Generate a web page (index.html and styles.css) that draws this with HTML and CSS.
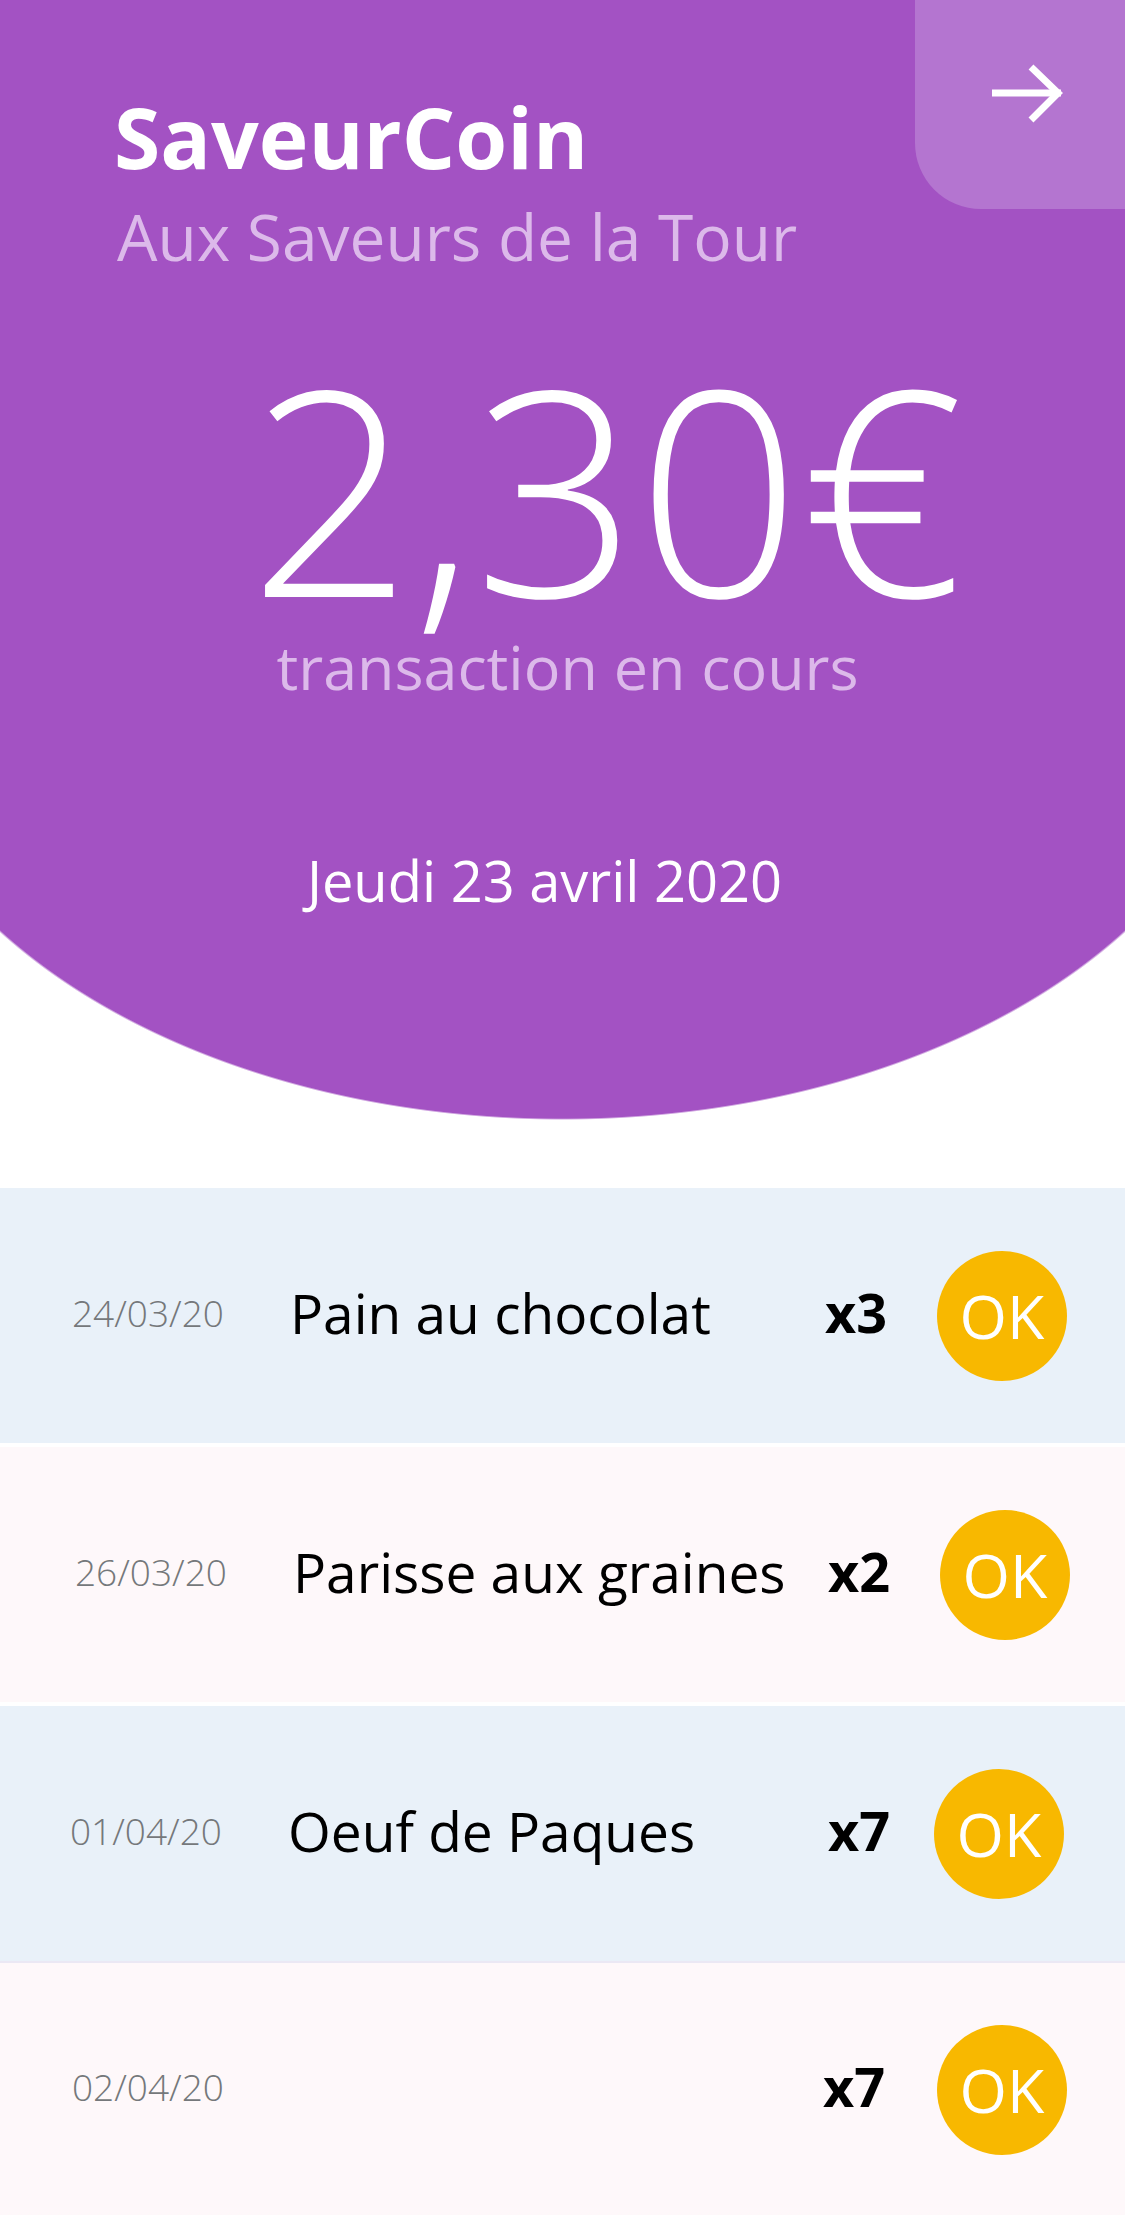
FILE: index.html
```html
<!DOCTYPE html>
<html lang="fr">
<head>
<meta charset="utf-8">
<title>SaveurCoin</title>
<link rel="stylesheet" href="styles.css">
</head>
<body>
<div class="screen">
  <header class="header">
    <a class="next-btn" href="#" aria-label="Suivant">
      <svg width="210" height="209" viewBox="0 0 210 209">
        <path d="M77 93 H146" stroke="#fff" stroke-width="7" fill="none"/>
        <path d="M116 67 L143 93 L116 120" stroke="#fff" stroke-width="7" fill="none"/>
      </svg>
    </a>
    <div class="brand">
      <h1 class="title">SaveurCoin</h1>
      <p class="subtitle">Aux Saveurs de la Tour</p>
    </div>
    <div class="amount">2,30€</div>
    <div class="status">transaction en cours</div>
    <div class="today">Jeudi 23 avril 2020</div>
  </header>

  <ul class="list">
    <li class="row row-blue">
      <span class="date">24/03/20</span>
      <span class="name">Pain au chocolat</span>
      <span class="qty">x3</span>
      <span class="ok">OK</span>
    </li>
    <li class="row row-pink row-shift-right">
      <span class="date">26/03/20</span>
      <span class="name">Parisse aux graines</span>
      <span class="qty">x2</span>
      <span class="ok">OK</span>
    </li>
    <li class="row row-blue row-shift-left">
      <span class="date">01/04/20</span>
      <span class="name">Oeuf de Paques</span>
      <span class="qty">x7</span>
      <span class="ok">OK</span>
    </li>
    <li class="row row-pink row-last">
      <span class="date">02/04/20</span>
      <span class="name"></span>
      <span class="qty qty-narrow">x7</span>
      <span class="ok">OK</span>
    </li>
  </ul>
</div>
</body>
</html>
```

FILE: styles.css
```css
* { box-sizing: border-box; }

html, body {
  margin: 0;
  padding: 0;
  background: #ffffff;
}

body {
  font-family: "Open Sans", "Noto Sans", "Liberation Sans", sans-serif;
  color: #000;
  overflow: hidden;
}

.screen {
  width: 1125px;
  height: 2215px;
  overflow: hidden;
}

/* ---------- header ---------- */
.header {
  position: relative;
  height: 1188px;
  padding-top: 87px;
  background:
    linear-gradient(#a352c3, #a352c3) top left / 100% 670px no-repeat,
    radial-gradient(693px 450px at 50% 670px, #a352c3 99.6%, rgba(163, 82, 195, 0) 100%) no-repeat;
  color: #fff;
}

.next-btn {
  position: absolute;
  top: 0;
  right: 0;
  width: 210px;
  height: 209px;
  background: #b475d0;
  border-bottom-left-radius: 66px;
  display: block;
}

.next-btn svg { display: block; }

.brand {
  padding-left: 114px;
}

.title {
  margin: 0;
  font-size: 84px;
  font-weight: 700;
  line-height: 100px;
}

.subtitle {
  margin: 10px 0 0 3px;
  font-size: 64px;
  font-weight: 400;
  line-height: 80px;
  color: #dcb9ea;
}

.amount {
  margin-top: 64px;
  padding-left: 88px;
  text-align: center;
  font-size: 286px;
  font-weight: 300;
  line-height: 290px;
}

.status {
  margin-top: 1px;
  padding-left: 10px;
  text-align: center;
  font-size: 61px;
  font-weight: 400;
  line-height: 70px;
  color: #dcb9ea;
}

.today {
  margin-top: 143px;
  padding-right: 36px;
  text-align: center;
  font-size: 56px;
  font-weight: 400;
  line-height: 70px;
}

/* ---------- list ---------- */
.list {
  list-style: none;
  margin: 0;
  padding: 0;
  display: flex;
  flex-direction: column;
  gap: 4px;
}

.row {
  height: 255px;
  display: grid;
  grid-template-columns: 218px 1fr 112px 130px;
  align-items: center;
  padding: 0 58px 0 72px;
}

.row-blue { background: #e9f1f9; }
.row-pink { background: #fef8fa; }
.row-shift-right { padding: 0 55px 0 75px; }
.row-shift-left { padding: 0 61px 0 70px; }
.row-shift-left .qty { margin-left: 6px; }
.row-last { margin-top: -4px; border-top: 2px solid #ebe8f4; }

.date,
.name,
.qty {
  margin-bottom: 7px;
}

.date {
  font-size: 37px;
  font-weight: 300;
  color: #75787b;
}

.name {
  font-size: 55px;
  font-weight: 400;
  color: #000;
  white-space: nowrap;
}

.qty {
  font-size: 54px;
  font-weight: 700;
  color: #000;
}

.qty-narrow { margin-left: -2px; }

.ok {
  width: 130px;
  height: 130px;
  border-radius: 50%;
  background: #f8b800;
  color: #fff;
  font-size: 61px;
  font-weight: 400;
  display: flex;
  align-items: center;
  justify-content: center;
  line-height: 1;
}
```
